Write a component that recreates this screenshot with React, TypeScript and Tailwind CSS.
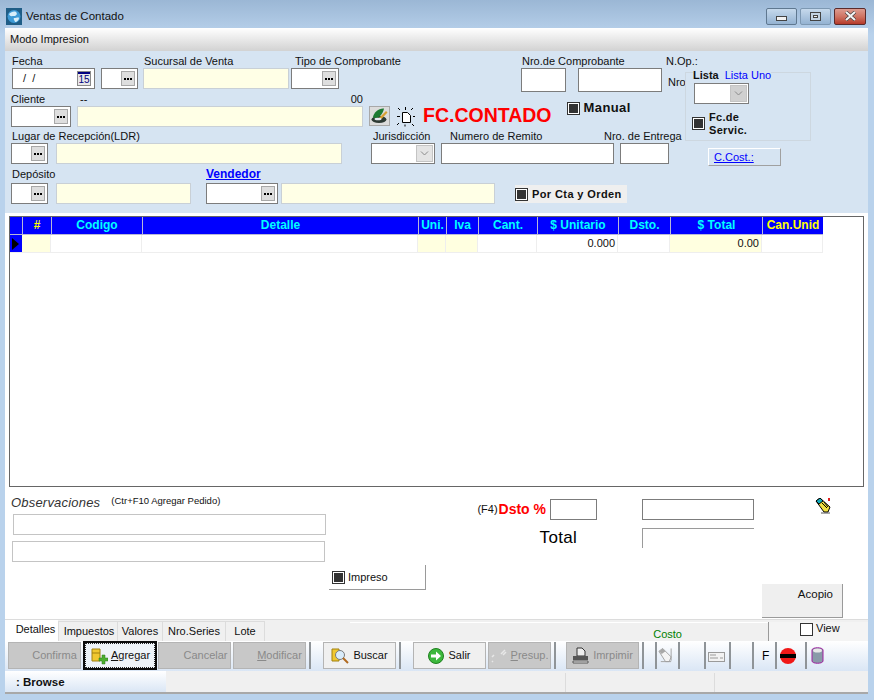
import type { ReactNode } from "react";

const COLUMNS = [
  { label: "#", color: "text-[#ffff00]", cell: "bg-[#ffffe0]" },
  { label: "Codigo", color: "text-[#00ffff]", cell: "bg-white" },
  { label: "Detalle", color: "text-[#00ffff]", cell: "bg-white" },
  { label: "Uni.", color: "text-[#00ffff]", cell: "bg-[#ffffe0]" },
  { label: "Iva", color: "text-[#00ffff]", cell: "bg-[#ffffe0]" },
  { label: "Cant.", color: "text-[#00ffff]", cell: "bg-white" },
  { label: "$ Unitario", color: "text-[#00ffff]", cell: "bg-white", value: "0.000" },
  { label: "Dsto.", color: "text-[#00ffff]", cell: "bg-white" },
  { label: "$ Total", color: "text-[#00ffff]", cell: "bg-[#ffffe0]", value: "0.00" },
  { label: "Can.Unid", color: "text-[#ffff00]", cell: "bg-white" },
];

function Dots() {
  return (
    <span className="flex h-[15px] w-[14px] shrink-0 items-center justify-center gap-px border border-[#a8a8a8] bg-[#dedede]">
      <i className="h-[2px] w-[2px] bg-black" />
      <i className="h-[2px] w-[2px] bg-black" />
      <i className="h-[2px] w-[2px] bg-black" />
    </span>
  );
}

function Chevron({ light }: { light?: boolean }) {
  return (
    <span className={`flex h-[17px] w-[17px] shrink-0 items-center justify-center border border-[#c4c4c4] ${light ? "bg-[#d0d0d0]" : "bg-[#e4e4e4]"}`}>
      <svg width="9" height="5" viewBox="0 0 9 5" fill="none" stroke="#8a8a8a">
        <path d="M1 0.5l3.5 3.5 3.5-3.5" />
      </svg>
    </span>
  );
}

function Lookup({ className }: { className: string }) {
  return (
    <div className={`flex h-[21px] items-center justify-end border border-[#7c7c7c] bg-white pr-[2px] ${className}`}>
      <Dots />
    </div>
  );
}

function Blank({ className }: { className: string }) {
  return <div className={`h-[21px] border border-[#7c7c7c] bg-white ${className}`} />;
}

function Yellow({ className }: { className: string }) {
  return <div className={`h-[21px] border border-[#c9d0d6] bg-[#ffffe6] ${className}`} />;
}

function Select({ className }: { className: string }) {
  return (
    <div className={`flex h-[21px] items-center justify-end border border-[#7c7c7c] bg-white pr-px ${className}`}>
      <Chevron />
    </div>
  );
}

function Check({ className = "" }: { className?: string }) {
  return (
    <span className={`flex h-[13px] w-[13px] shrink-0 items-center justify-center border border-[#333] bg-white ${className}`}>
      <i className="h-[9px] w-[9px] bg-[#333]" />
    </span>
  );
}

// label never widens the field: the input decides the column width
function Field({ label, children, className = "" }: { label: ReactNode; children: ReactNode; className?: string }) {
  return (
    <div className={`flex flex-col ${className}`}>
      <span className="h-[14px] w-0 whitespace-nowrap leading-[14px]">{label}</span>
      {children}
    </div>
  );
}

function Globe() {
  return (
    <svg width="16" height="17" viewBox="0 0 16 17" className="shrink-0">
      <rect width="16" height="17" fill="#1f5d86" />
      <circle cx="8" cy="8.500" r="6.500" fill="#3d9ad6" />
      <path d="M3 6c2-2 5-3 7-2 2 2 0 4-2 4S4 9 3 6zM8 10c2 0 5-1 5 0 0 2-2 4-4 4 0-1-2-3-1-4z" fill="#d7eefa" />
    </svg>
  );
}

function WindowButton({ kind }: { kind: "min" | "max" | "close" }) {
  if (kind === "close") {
    return (
      <div className="flex h-[17px] w-[32px] items-center justify-center rounded-[2px] border border-[#5b2b2b] bg-gradient-to-b from-[#dd9c90] via-[#cf7463] to-[#b5392a]">
        <svg width="13" height="10" viewBox="0 0 13 10">
          <path d="M2 1l9 8M11 1l-9 8" stroke="#3b3b3b" strokeWidth="3.4" />
          <path d="M2 1l9 8M11 1l-9 8" stroke="#f4f4f4" strokeWidth="2.2" />
        </svg>
      </div>
    );
  }
  return (
    <div className={`flex h-[17px] w-[31px] justify-center rounded-[2px] border bg-gradient-to-b from-[#c6d9ec] to-[#94b3d2] ${kind === "min" ? "items-end border-[#5f7890] pb-[3px]" : "items-center border-[#7d98b2]"}`}>
      {kind === "min" ? (
        <i className="h-[5px] w-[11px] border border-[#444] bg-[#f1f1f1]" />
      ) : (
        <span className="flex h-[9px] w-[11px] items-center justify-center border border-[#444] bg-[#c3d3e3]">
          <i className="h-[3px] w-[5px] border border-[#444] bg-[#eee]" />
        </span>
      )}
    </div>
  );
}

function TitleBar() {
  return (
    <div className="flex h-[28px] shrink-0 items-center pl-[6px] pr-[8px] pt-[5px]">
      <Globe />
      <span className="ml-[4px] text-[11.5px] text-[#111]">Ventas de Contado</span>
      <div className="ml-auto flex gap-[3px] pb-[1px]">
        <WindowButton kind="min" />
        <WindowButton kind="max" />
        <WindowButton kind="close" />
      </div>
    </div>
  );
}

function FormPanel() {
  return (
    <div className="relative h-[162px] shrink-0 bg-[#d6e4f2] pt-[3px] text-[11px] text-[#111]">
      <div className="flex h-[38px] items-start">
        <Field label="Fecha" className="ml-[7px]">
          <div className="flex h-[21px] w-[83px] items-center justify-between border border-[#7c7c7c] bg-white pl-[10px] pr-[3px]">
            <span>/ &nbsp;/</span>
            <span className="flex h-[15px] w-[14px] flex-col items-center border border-[#8a8a8a] bg-[#e8e8e8] text-[10px] leading-[11px] text-[#000080]">
              <i className="h-[2px] w-full bg-[#000080]" />
              15
            </span>
          </div>
        </Field>
        <Field label="" className="ml-[6px]">
          <Lookup className="w-[37px]" />
        </Field>
        <Field label={<span className="ml-px">Sucursal de Venta</span>} className="ml-[5px]">
          <Yellow className="w-[146px]" />
        </Field>
        <Field label={<span className="ml-[4px]">Tipo de Comprobante</span>} className="ml-[2px]">
          <Lookup className="w-[48px]" />
        </Field>
        <Field label={<span className="ml-px">Nro.de Comprobante</span>} className="ml-[182px]">
          <div className="flex gap-[12px]">
            <div className="h-[24px] w-[45px] border border-[#7c7c7c] bg-white" />
            <div className="h-[24px] w-[84px] border border-[#7c7c7c] bg-white" />
          </div>
        </Field>
        <div className="ml-[4px] flex flex-col">
          <span className="h-[14px] leading-[14px]">N.Op.:</span>
          <span className="ml-[2px] mt-[7px] leading-[14px]">Nro</span>
        </div>
      </div>

      <div className="flex h-[37px] items-start">
        <Field label="Cliente" className="ml-[6px]">
          <Lookup className="w-[60px]" />
        </Field>
        <div className="ml-[6px] flex flex-col">
          <div className="flex h-[14px] justify-between pl-[3px] leading-[14px]">
            <span>--</span>
            <span>00</span>
          </div>
          <Yellow className="w-[286px]" />
        </div>
        <div className="ml-[6px] mt-[14px] flex h-[20px] w-[21px] items-center justify-center border border-[#a8a8a8] bg-[#dcdcdc]">
          <svg width="18" height="16" viewBox="0 0 18 16">
            <ellipse cx="8" cy="11.500" rx="7.500" ry="3.500" fill="#2d3a34" />
            <path d="M2 9c1-5 6-9 11-8.500-1 5-4 9-9 10z" fill="#1d7a32" />
            <path d="M8 10l7-7 1.500 1.500-6 6.500z" fill="#d8a033" />
            <ellipse cx="7" cy="11" rx="3.500" ry="1.300" fill="#e8e8f0" />
          </svg>
        </div>
        <svg width="18" height="20" viewBox="0 0 18 20" className="ml-[7px] mt-[15px]" fill="none" stroke="#000">
          <path d="M5.500 5.500h5l3 3v7h-8z" fill="#fff" />
          <path d="M3 9.500H0M18 9.500h-2M8.500 3V0M3 3l-2-2M14 3l2-2M2 16l-2 2M15 17l2 2M8 17.500v2" />
        </svg>
        <span className="ml-[8px] mt-[12px] whitespace-nowrap text-[19.500px] font-bold leading-[22px] text-[#ff0000]">FC.CONTADO</span>
        <Check className="ml-[15px] mt-[10px]" />
        <span className="ml-[4px] mt-[8px] text-[13px] font-bold leading-[16px] tracking-[0.4px]">Manual</span>
      </div>

      <div className="flex h-[37px] items-start">
        <Field label={<span className="ml-px">Lugar de Recepción(LDR)</span>} className="ml-[6px]">
          <Lookup className="w-[37px]" />
        </Field>
        <Yellow className="ml-[8px] mt-[14px] w-[286px]" />
        <Field label={<span className="ml-[2px]">Jurisdicción</span>} className="ml-[29px]">
          <Select className="w-[64px]" />
        </Field>
        <Field label={<span className="ml-[9px]">Numero de Remito</span>} className="ml-[6px]">
          <Blank className="w-[173px]" />
        </Field>
        <Field label={<span className="-ml-[16px]">Nro. de Entrega</span>} className="ml-[6px]">
          <Blank className="w-[49px]" />
        </Field>
      </div>

      <div className="flex items-start">
        <Field label={<span className="ml-px block pt-[1px]">Depósito</span>} className="ml-[6px]">
          <Lookup className="mt-[3px] w-[37px]" />
        </Field>
        <Yellow className="ml-[8px] mt-[17px] w-[135px]" />
        <Field label={<span className="block pt-[1px] text-[12px] font-bold text-[#0000ff] underline">Vendedor</span>} className="ml-[15px]">
          <Lookup className="mt-[3px] w-[72px]" />
        </Field>
        <Yellow className="ml-[3px] mt-[17px] w-[214px]" />
        <div className="ml-[20px] mt-[19px] flex h-[18px] w-[112px] items-center bg-[#efefef]">
          <Check />
          <span className="ml-[4px] whitespace-nowrap text-[11px] font-bold tracking-[0.4px]">Por Cta y Orden</span>
        </div>
      </div>

      {/* group box sits on top of the Nro label */}
      <div className="absolute left-[680px] top-[21px] h-[69px] w-[126px] border border-[#cdd7e0]">
        <div className="absolute -top-[5px] left-[7px] flex items-center gap-[6px] bg-[#d6e4f2] leading-[14px]">
          <span className="font-bold">Lista</span>
          <span className="text-[#0000ff]">Lista Uno</span>
        </div>
        <div className="absolute left-[8px] top-[10px] flex h-[21px] w-[55px] items-center justify-end border border-[#7c7c7c] bg-white pr-px">
          <Chevron light />
        </div>
        <Check className="absolute left-[6px] top-[44px]" />
        <span className="absolute left-[23px] top-[38px] text-[11px] font-bold leading-[13px] tracking-[0.3px]">
          Fc.de
          <br />
          Servic.
        </span>
      </div>
      <div className="absolute left-[703px] top-[97px] flex h-[18px] w-[73px] items-center border-b border-l border-r border-t border-b-[#a0a0a0] border-l-white border-r-[#a0a0a0] border-t-white pl-[5px] text-[#0000ff] underline">
        C.Cost.:
      </div>
    </div>
  );
}

function ItemsGrid() {
  return (
    <div className="mx-[4px] mt-[3px] h-[271px] shrink-0 border border-[#666] bg-white">
      <div className="grid w-[813px] grid-cols-[12px_29px_91px_276px_28px_32px_59px_81px_52px_92px_61px]">
        <div className="h-[18px] border-b border-[#b8b8d8] bg-[#0000ff]" />
        {COLUMNS.map((c) => (
          <div key={c.label} className={`h-[18px] overflow-hidden whitespace-nowrap border-b border-l border-[#b8b8d8] bg-[#0000ff] text-center text-[12px] font-bold leading-[17px] ${c.color}`}>
            {c.label}
          </div>
        ))}
        <div className="flex h-[18px] items-center border-b border-[#eee] bg-[#0000ff] pl-[2px]">
          <svg width="8" height="12" viewBox="0 0 8 12">
            <path d="M0 0l7 6-7 6z" fill="#000" />
          </svg>
        </div>
        {COLUMNS.map((c) => (
          <div key={c.label} className={`h-[18px] border-b border-r border-[#eee] pr-[2px] text-right text-[11px] leading-[17px] text-[#111] ${c.cell}`}>
            {c.value}
          </div>
        ))}
      </div>
    </div>
  );
}

function BottomForm() {
  return (
    <div className="flex h-[132px] shrink-0 bg-white text-[11px] text-[#111]">
      <div className="ml-[6px] flex w-[421px] shrink-0 flex-col">
        <div className="mt-[8px] flex h-[16px] items-center">
          <span className="text-[13px] italic leading-[16px] tracking-[0.2px] text-[#333]">Observaciones</span>
          <span className="-mt-[5px] ml-[11px] text-[9.500px] leading-[12px]">(Ctr+F10 Agregar Pedido)</span>
        </div>
        <div className="ml-[2px] mt-[3px] h-[21px] w-[313px] border border-[#c4c4c4]" />
        <div className="ml-[1px] mt-[6px] h-[21px] w-[313px] border border-[#c4c4c4]" />
        <div className="ml-[318px] mt-[3px] flex h-[25px] w-[97px] items-center border-b border-r border-[#9a9a9a] pl-[3px]">
          <Check />
          <span className="ml-[3px]">Impreso</span>
        </div>
      </div>
      <div className="ml-[46px] flex w-[119px] shrink-0 flex-col items-end pt-[12px]">
        <div className="flex items-center">
          <span className="text-[11px]">(F4)</span>
          <span className="ml-px whitespace-nowrap text-[14px] font-bold text-[#ff0000]">Dsto %</span>
          <div className="ml-[4px] h-[21px] w-[47px] shrink-0 border border-[#7c7c7c]" />
        </div>
        <span className="mr-[20px] mt-[7px] text-[17px] leading-[22px] tracking-[0.3px] text-black">Total</span>
      </div>
      <div className="ml-[45px] flex w-[112px] shrink-0 flex-col pt-[12px]">
        <div className="h-[21px] border border-[#7c7c7c]" />
        <div className="mt-[8px] h-[20px] border-l border-t border-[#9a9a9a]" />
      </div>
      <div className="flex flex-1 flex-col">
        <svg width="16" height="16" viewBox="0 0 16 16" className="ml-[61px] mt-[11px]">
          <path d="M1 3l4-3 10 9-2 5-4 0z" fill="#f0e040" stroke="#000" />
          <path d="M1 3l4-3 3 3-4 3z" fill="#11aabb" stroke="#000" />
          <path d="M13 0h2v3h-2z" fill="#e02020" />
          <path d="M6 15h9" stroke="#555" />
          <path d="M7 5l5 5M9 4l4 5" stroke="#000" />
        </svg>
        <div className="ml-[8px] mt-[70px] flex h-[34px] w-[81px] justify-end border-b border-r border-[#9a9a9a] bg-[#efefef] pr-[9px] pt-[2px] text-[11.500px]">
          Acopio
        </div>
      </div>
    </div>
  );
}

function Tabs() {
  return (
    <div className="flex h-[22px] shrink-0 border-t border-[#dcdcdc] bg-[#f0f0f0] text-[11px] text-[#111]">
      <div className="flex h-[21px] w-[53px] items-center justify-center bg-white pb-[3px] pl-[8px]">Detalles</div>
      <div className="flex h-[21px] items-end">
        <span className="flex h-[20px] w-[59px] items-center justify-center border-l border-t border-[#dcdcdc] pl-[2px]">Impuestos</span>
        <span className="flex h-[20px] w-[45px] items-center justify-center border-l border-t border-[#dcdcdc]">Valores</span>
        <span className="flex h-[20px] w-[63px] items-center justify-center border-l border-t border-[#dcdcdc]">Nro.Series</span>
        <span className="flex h-[20px] w-[40px] items-center justify-center border-l border-r border-t border-[#dcdcdc]">Lote</span>
      </div>
      <div className="ml-[85px] mt-[2px] flex h-[19px] w-[418px] justify-end border-t border-white pr-[86px] pt-[3px] text-[#008000]">Costo</div>
      <div className="mt-[2px] flex h-[19px] flex-1 border-l border-[#9a9a9a] bg-[#f4f4f4] pl-[31px]">
        <span className="mt-[1px] h-[13px] w-[13px] border border-[#333] bg-white" />
        <span className="ml-[3px] text-[11px] leading-[13px]">View</span>
      </div>
    </div>
  );
}

function ToolButton({ label, disabled, width, children }: { label: ReactNode; disabled?: boolean; width: string; children?: ReactNode }) {
  return (
    <div className={`flex h-[27px] shrink-0 items-center justify-center gap-[4px] border border-[#b4b4b4] text-[11px] ${width} ${disabled ? "bg-[#c8c8c8] text-[#8a8a8a]" : "bg-[#f0f0f0] text-[#111]"}`}>
      {children}
      <span>{label}</span>
    </div>
  );
}

function Sep({ className }: { className: string }) {
  return <i className={`h-[27px] w-[2px] shrink-0 bg-[#8f9498] ${className}`} />;
}

function Toolbar() {
  return (
    <div className="flex h-[30px] shrink-0 items-center bg-gradient-to-b from-white to-[#dae6f5] pb-[1px] pl-[3px]">
      <ToolButton label={<span className="ml-[20px]">Confirma</span>} disabled width="w-[73px]" />
      <div className="ml-[2px] flex h-[29px] w-[74px] shrink-0 items-center justify-center gap-[3px] border-2 border-[#0b0b0b] bg-[#eef3f8] text-[11px] text-[#111] outline-1 -outline-offset-3 outline-[#222] outline-dotted">
        <svg width="18" height="18" viewBox="0 0 18 18">
          <path d="M2 2h8v12H2z" fill="#f0c830" stroke="#a08010" />
          <path d="M2 6h8" stroke="#a08010" />
          <path d="M9 11h3V8h3v3h3v3h-3v3h-3v-3H9z" fill="#4caf30" stroke="#2a7a1a" strokeWidth="0.5" />
        </svg>
        <span><u>A</u>gregar</span>
      </div>
      <ToolButton label={<span className="ml-[22px]">Cancelar</span>} disabled width="ml-px w-[73px]" />
      <ToolButton label={<span className="ml-[20px]"><u>M</u>odificar</span>} disabled width="ml-[2px] w-[73px]" />
      <Sep className="ml-[3px]" />
      <ToolButton label="Buscar" width="ml-[12px] w-[73px]">
        <svg width="18" height="17" viewBox="0 0 18 17">
          <path d="M1 2h7v12H1z" fill="#f0c830" stroke="#a08010" />
          <circle cx="9" cy="8" r="4.500" fill="#d9ecfa" stroke="#7a7a7a" />
          <path d="M12 11l5 5" stroke="#b06a20" strokeWidth="2" />
        </svg>
      </ToolButton>
      <Sep className="ml-[3px]" />
      <ToolButton label="Salir" width="ml-[12px] w-[73px]">
        <svg width="16" height="16" viewBox="0 0 16 16">
          <circle cx="8" cy="8" r="7.500" fill="#3cb83c" stroke="#1f7f1f" />
          <path d="M3 6.500h5V3.500L13 8l-5 4.500V9.500H3z" fill="#fff" />
        </svg>
      </ToolButton>
      <ToolButton label={<><u>P</u>resup.</>} disabled width="ml-[2px] w-[63px]">
        <svg width="16" height="14" viewBox="0 0 16 14" fill="none" stroke="#e8e8e8" strokeWidth="1.500">
          <path d="M10 5l4-4M12 6l3-3M1 8l2-2M1 12l1 1" />
        </svg>
      </ToolButton>
      <Sep className="ml-[3px]" />
      <ToolButton label="Imrpimir" disabled width="ml-[10px] w-[73px]">
        <svg width="17" height="17" viewBox="0 0 17 17">
          <path d="M5 1h5l3 3v5H5z" fill="#eee" stroke="#333" />
          <path d="M1 9h15v4H1z" fill="#555" />
          <path d="M1 14h15v2H1z" fill="#eee" stroke="#555" />
        </svg>
      </ToolButton>
      <Sep className="ml-[3px]" />
      <Sep className="ml-[11px]" />
      <svg width="15" height="17" viewBox="0 0 16 17" className="ml-px shrink-0">
        <path d="M1 4l4-3 9 9-2 5-4 0z" fill="#f4f4f4" stroke="#a0a0a0" />
        <path d="M1 4l4-3 3 3-4 3z" fill="#a8a8a8" />
        <path d="M14 1v13M3 15h11" stroke="#a0a0a0" />
      </svg>
      <Sep className="ml-[5px]" />
      <Sep className="ml-[24px]" />
      <svg width="17" height="10" viewBox="0 0 17 10" className="ml-[2px] mt-[2px] shrink-0" fill="#f2f2f2" stroke="#9a9a9a">
        <rect x="0.500" y="0.500" width="16" height="9" />
        <path d="M2 3h6M2 6h8M12 6h3" />
      </svg>
      <Sep className="ml-[4px]" />
      <Sep className="ml-[21px]" />
      <span className="ml-[8px] w-[8px] text-[12px] text-black">F</span>
      <Sep className="ml-[5px]" />
      <span className="ml-[3px] flex h-[16px] w-[16px] shrink-0 items-center rounded-full bg-[#f01818]">
        <i className="h-[4px] w-full bg-black" />
      </span>
      <Sep className="ml-[9px]" />
      <svg width="13" height="17" viewBox="0 0 13 17" className="ml-[4px] shrink-0">
        <path d="M1 3c0-3 11-3 11 0v11c0 3-11 3-11 0z" fill="#8a9aa8" stroke="#a020a0" />
        <ellipse cx="6.500" cy="3.500" rx="4.500" ry="2" fill="#e8e8e8" />
      </svg>
    </div>
  );
}

function StatusBar() {
  return (
    <div className="flex h-[23px] shrink-0 border-b-2 border-[#a8a8a8] bg-[#f0f0f0]">
      <div className="flex h-[21px] w-[161px] items-center bg-gradient-to-b from-white to-[#dae6f5] pl-[11px] pt-[2px] text-[11.500px] font-bold text-[#111]">
        : Browse
      </div>
      <div className="ml-[399px] mt-[2px] h-[19px] w-[150px] border-l border-r border-[#dcdcdc]" />
    </div>
  );
}

export default function App() {
  return (
    <div className="flex h-[700px] w-[874px] flex-col overflow-hidden bg-gradient-to-b from-[#9bb7d5] from-0% to-[#b9d2ec] to-[5%] font-['Liberation_Sans',Arial,sans-serif]">
      <TitleBar />
      <div className="ml-[5px] flex w-[863px] flex-col bg-white">
        <div className="flex h-[23px] shrink-0 items-center bg-gradient-to-b from-white to-[#d2d2d2] pl-[5px] text-[11px] text-[#111]">
          Modo Impresion
        </div>
        <FormPanel />
        <ItemsGrid />
        <BottomForm />
        <Tabs />
        <Toolbar />
        <StatusBar />
      </div>
    </div>
  );
}
